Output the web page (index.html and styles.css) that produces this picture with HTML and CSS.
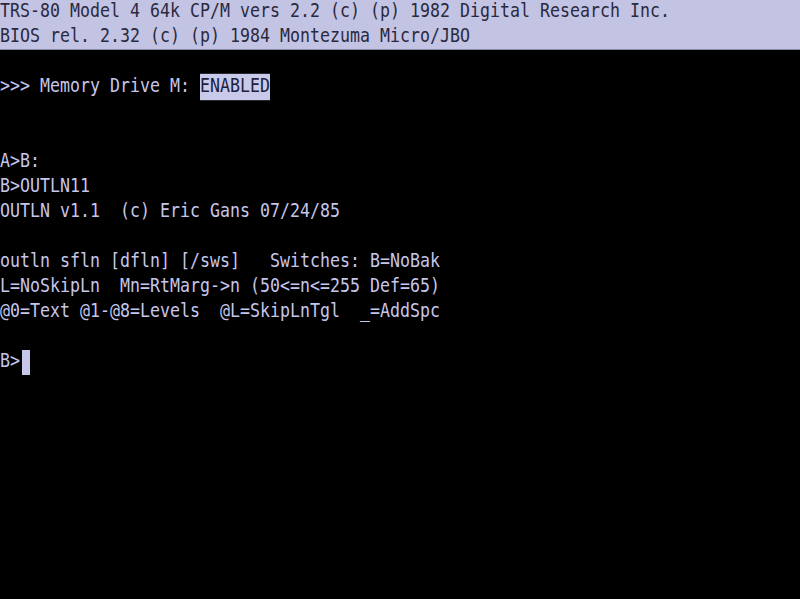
FILE: index.html
```html
<!DOCTYPE html>
<html>
<head>
<meta charset="utf-8">
<link rel="stylesheet" href="styles.css">
</head>
<body>
<div class="screen">
  <div class="banner">
    <div class="line"><span class="txt">TRS-80 Model 4 64k CP/M vers 2.2 (c) (p) 1982 Digital Research Inc.</span></div>
    <div class="line"><span class="txt">BIOS rel. 2.32 (c) (p) 1984 Montezuma Micro/JBO</span></div>
  </div>
  <div class="line"></div>
  <div class="line"><span class="txt">&gt;&gt;&gt; Memory Drive M: <span class="inv">ENABLED</span></span></div>
  <div class="line"></div>
  <div class="line"></div>
  <div class="line"><span class="txt">A&gt;B:</span></div>
  <div class="line"><span class="txt">B&gt;OUTLN11</span></div>
  <div class="line"><span class="txt">OUTLN v1.1  (c) Eric Gans 07/24/85</span></div>
  <div class="line"></div>
  <div class="line"><span class="txt">outln sfln [dfln] [/sws]   Switches: B=NoBak</span></div>
  <div class="line"><span class="txt">L=NoSkipLn  Mn=RtMarg-&gt;n (50&lt;=n&lt;=255 Def=65)</span></div>
  <div class="line"><span class="txt">@0=Text @1-@8=Levels  @L=SkipLnTgl  _=AddSpc</span></div>
  <div class="line"></div>
  <div class="line"><span class="txt">B&gt;</span><span class="cursor"></span></div>
</div>
</body>
</html>
```
FILE: styles.css
```css
html, body {
  margin: 0;
  padding: 0;
  background: #000;
  width: 800px;
  height: 599px;
  overflow: hidden;
}
.screen {
  width: 800px;
  height: 599px;
  background: #000;
  color: #c6c6ea;
  font-family: "DejaVu Sans Mono", "Liberation Mono", monospace;
  font-size: 16.61px;
}
.banner {
  background: #c3c3e3;
  color: #2a2a3e;
  border-bottom: 1px solid #8a8aa6;
  height: 49px;
}
.line {
  height: 25px;
  display: flex;
  align-items: flex-start;
  white-space: pre;
}
.txt {
  display: inline-block;
  line-height: 18px;
  transform: scaleY(1.2);
  transform-origin: 0 0;
}
.inv {
  display: inline-block;
  background: #c9c9ea;
  color: #20203a;
  padding-top: 1px;
  padding-bottom: 3px;
  margin-top: -1px;
}
.cursor {
  display: inline-block;
  width: 8px;
  height: 25px;
  margin-left: 2px;
  background: #c6c6ea;
}
```
